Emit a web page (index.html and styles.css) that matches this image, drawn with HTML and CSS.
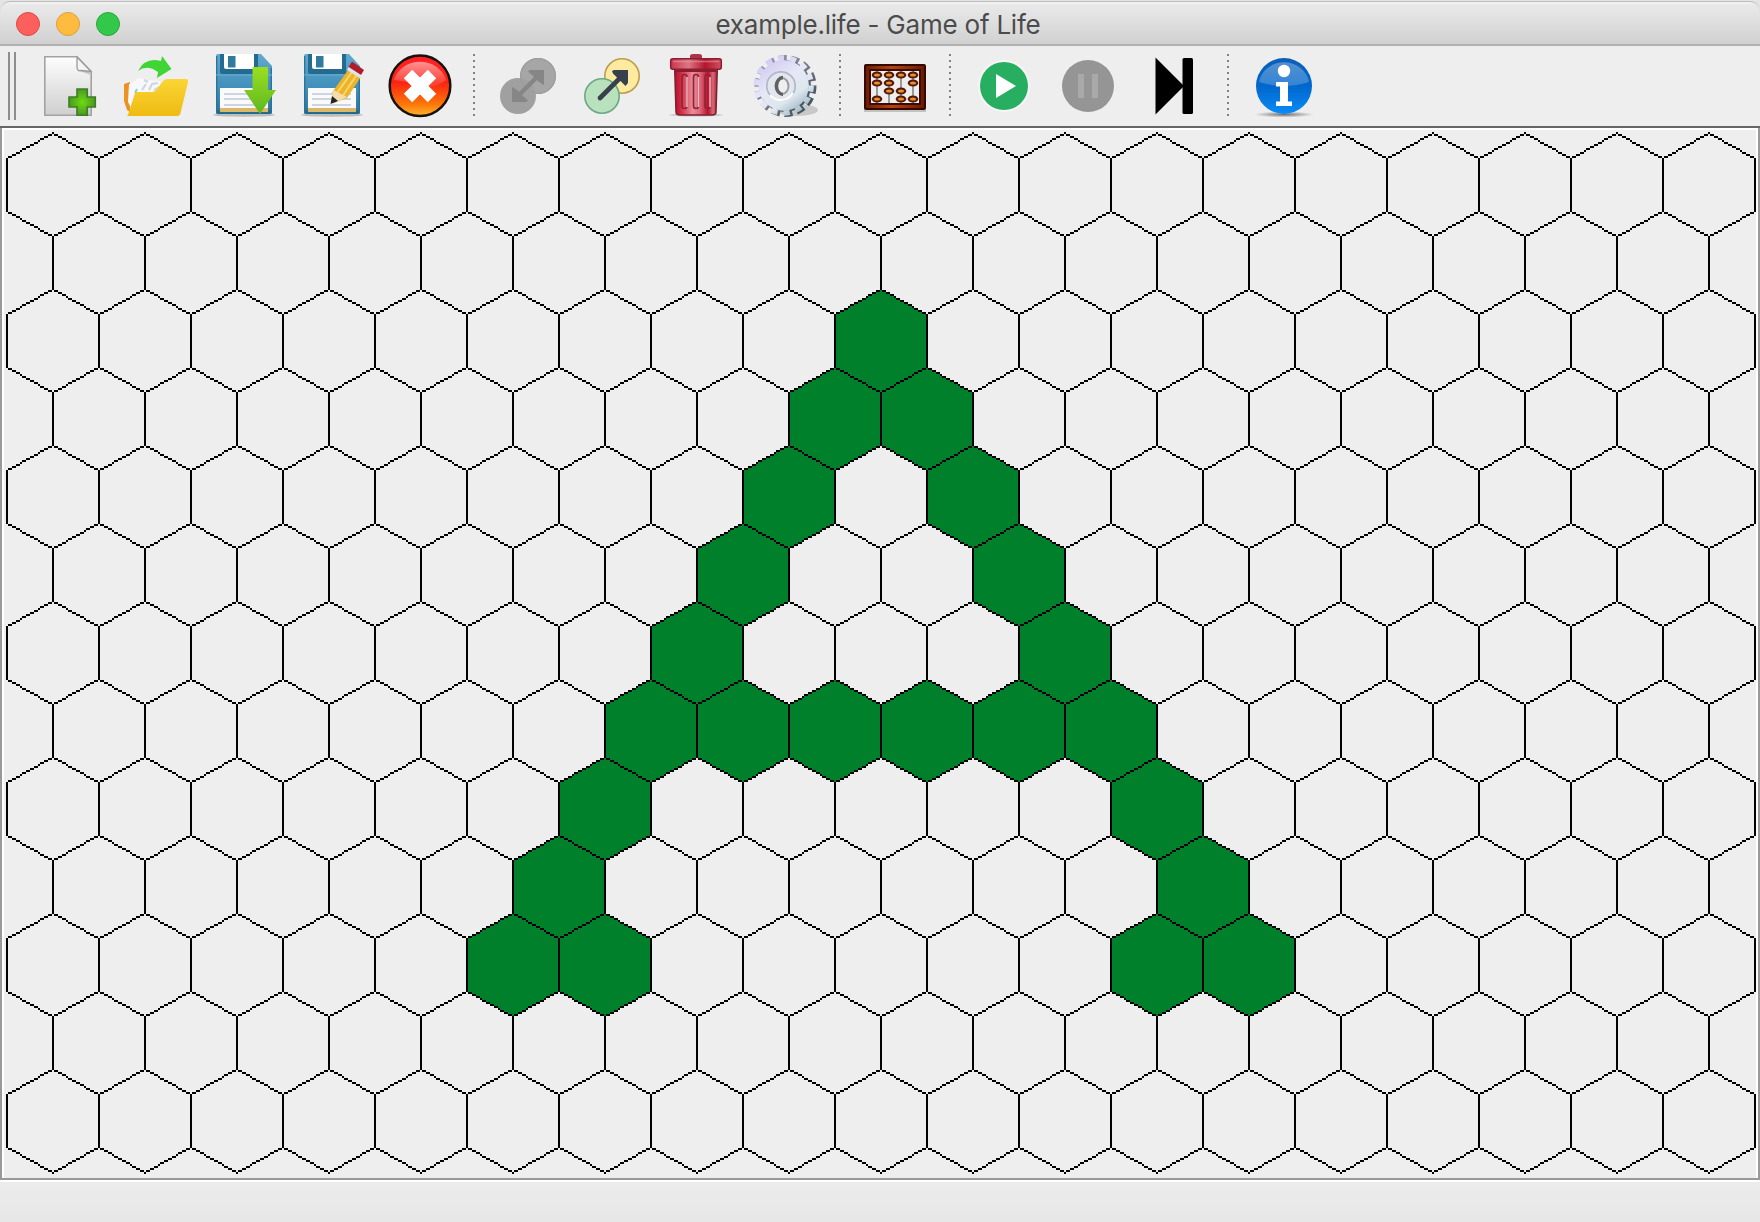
FILE: index.html
```html
<!DOCTYPE html>
<html lang="en">
<head>
<meta charset="utf-8">
<title>example.life - Game of Life</title>
<link rel="stylesheet" href="styles.css">
</head>
<body>
<div class="window">
  <header class="titlebar">
    <div class="lights">
      <span class="light light-close"></span>
      <span class="light light-min"></span>
      <span class="light light-max"></span>
    </div>
    <h1 class="title">example.life - Game of Life</h1>
  </header>

  <nav class="toolbar">
    <span class="grip"></span>

    <svg class="tool" width="88" height="80" viewBox="26 46 88 80" role="img" aria-label="New">
      <defs>
        <linearGradient id="paper" x1="0" y1="0" x2="0" y2="1"><stop offset="0" stop-color="#fdfdfd"/><stop offset="1" stop-color="#cfcfcf"/></linearGradient>
        <radialGradient id="plus"><stop offset="0" stop-color="#6ddb10"/><stop offset="1" stop-color="#489a22"/></radialGradient>
      </defs>
      <path d="M44.8 56.8H77L91.200 71.500V115.200H44.800Z" fill="url(#paper)" stroke="#a2a2a2" stroke-width="1.600"/>
      <path d="M77 57V69Q77 72 81 71.500L91 75V71Z" fill="#c2c2c2"/>
      <path d="M77 57V67Q77 71 81 70.500L91 71.500Z" fill="#f4f4f4" stroke="#999" stroke-width="1.300"/>
      <path d="M77 89H87.300V97H95.300V107H87.300V115.300H77V107H69V97H77Z" fill="url(#plus)" stroke="#3f7c25" stroke-width="1.600"/>
    </svg>

    <svg class="tool" width="87" height="80" viewBox="114 46 87 80" role="img" aria-label="Open">
      <defs><linearGradient id="folder" x1="0" y1="0" x2="0" y2="1"><stop offset="0" stop-color="#fad534"/><stop offset="1" stop-color="#efbb12"/></linearGradient></defs>
      <path d="M124 84L130 82V112L127 110L124 101Z" fill="#ec9224"/>
      <path d="M129 84L135 81L138 78L148 80L160 81L162 93L131 108L128 102Z" fill="#f8f8fa"/>
      <path d="M142 90L146 84M148 82L144 80M149 90L152 84L158 83M154 90L160 87" fill="none" stroke="#cdd6e2" stroke-width="2.200"/>
      <path d="M135 93L137 89" stroke="#7fd0e2" stroke-width="2"/>
      <path d="M128 115L135 93Q135.500 92 137 92H152Q155 92 157 89L163 81Q165 79 167 79H186Q188.500 79 188 82L180.500 113Q180 116 177 116H128Q126 116 128 115Z" fill="url(#folder)"/>
      <path d="M138 71Q145 57 161 61L162 56L171.500 69L157 78L158 72Q147 64 138 71Z" fill="#40d534"/>
    </svg>

    <svg class="tool" width="88" height="80" viewBox="201 46 88 80" role="img" aria-label="Save">
      <defs>
        <linearGradient id="disk" x1="0" y1="0" x2="0" y2="1"><stop offset="0" stop-color="#62a9d0"/><stop offset=".6" stop-color="#3e8eb8"/><stop offset="1" stop-color="#2d7598"/></linearGradient>
        <linearGradient id="down" x1="0" y1="0" x2="0" y2="1"><stop offset="0" stop-color="#9adf20"/><stop offset="1" stop-color="#5fb621"/></linearGradient>
        <g id="floppy">
          <ellipse cx="244" cy="115" rx="31" ry="1.700" fill="#bcbcbc"/>
          <path d="M218 54H261L272 66V112Q272 114 270 114H218Q216 114 216 112V56Q216 54 218 54Z" fill="url(#disk)"/>
          <path d="M216 110H272V112Q272 114 270 114H218Q216 114 216 112Z" fill="#236b91"/>
          <path d="M216.700 56V112M271.300 68V112" stroke="#2c7199" stroke-width="1.300"/>
          <path d="M220 54H258V74H222Q220 74 220 72Z" fill="#236b91"/>
          <path d="M224 54H254V69H226Q224 69 224 67Z" fill="#fff"/>
          <rect x="228" y="56" width="7.500" height="11.500" fill="#32799e"/>
          <path d="M216 75H272" stroke="#70acd0" stroke-width="1"/>
          <path d="M220 88H268V111H220Z" fill="#fafafa"/>
          <path d="M224 94H263M224 99H263M224 105H263" stroke="#bcc7d8" stroke-width="1.700"/>
          <rect x="220" y="108" width="48" height="4" fill="#dcb768"/>
        </g>
      </defs>
      <use href="#floppy"/>
      <path d="M252.500 67H268V90H276L260 114L244 90H252.500Z" fill="url(#down)"/>
    </svg>

    <svg class="tool" width="87" height="80" viewBox="289 46 87 80" role="img" aria-label="Save As">
      <use href="#floppy" x="88"/>
      <path d="M348.500 69.500L360.500 77.500L347 98L333 103.500L332 92.500Z" fill="#ecb42b"/>
      <path d="M352 72L337 93M356.500 75L342 97" stroke="#f9d66b" stroke-width="2"/>
      <path d="M333 90L347 97L337 102L331 103Z" fill="#f3deb0"/>
      <path d="M332 96L338 101L330.500 104Z" fill="#222"/>
      <path d="M352 61.500L364 70L361 75L348.500 67Z" fill="#b11c29"/>
      <path d="M348.500 67L361 75L359.500 78L347 70Z" fill="#e5e2e5"/>
    </svg>

    <svg class="tool" width="88" height="80" viewBox="376 46 88 80" role="img" aria-label="Close">
      <defs><linearGradient id="red" x1="0" y1="0" x2="0" y2="1"><stop offset="0" stop-color="#ff2028"/><stop offset=".45" stop-color="#fb2412"/><stop offset=".8" stop-color="#fb7608"/><stop offset="1" stop-color="#ffb52b"/></linearGradient>
      <linearGradient id="shine" x1="0" y1="0" x2="0" y2="1"><stop offset="0" stop-color="#fff" stop-opacity=".5"/><stop offset="1" stop-color="#fff" stop-opacity=".08"/></linearGradient></defs>
      <circle cx="420" cy="85.700" r="30.300" fill="url(#red)" stroke="#17100c" stroke-width="2.500"/>
      <path d="M394 80A27 25 0 0 1 446 80Q433 90 420 85Q405 81 394 80Z" fill="url(#shine)"/>
      <path d="M408 74L432 98M432 74L408 98" stroke="#fff" stroke-width="12"/>
    </svg>

    <span class="separator"></span>

    <svg class="tool" width="88" height="80" viewBox="484 46 88 80" role="img" aria-label="Replace">
      <circle cx="538" cy="76" r="18" fill="#a6a6a6"/>
      <circle cx="518" cy="96" r="18" fill="#a0a0a0"/>
      <circle cx="538" cy="76" r="17.300" fill="none" stroke="#9d9d9d" stroke-width="1.300"/>
      <path d="M518 96L538 76" stroke="#868686" stroke-width="4.500"/>
      <path d="M544 70V85L539 82L532 75L528 71.500L530 70ZM512 102V87L517 90L524 97L528 100.500L526 102Z" fill="#868686"/>
    </svg>

    <svg class="tool" width="82" height="80" viewBox="572 46 82 80" role="img" aria-label="XOR">
      <circle cx="622" cy="76" r="17.200" fill="#ffeba0" stroke="#bd9d4b" stroke-width="1.600"/>
      <circle cx="602" cy="96" r="17.200" fill="#b9e1bd" stroke="#6aaa82" stroke-width="1.600"/>
      <path d="M600 98L622 76" stroke="#37404c" stroke-width="4.600" stroke-linecap="round"/>
      <path d="M628 70V83L625.500 86L613 73.500L612 71L614 70Z" fill="#37404c"/>
    </svg>

    <svg class="tool" width="86" height="80" viewBox="654 46 86 80" role="img" aria-label="Clear">
      <defs>
        <linearGradient id="bin"><stop offset="0" stop-color="#a9152b"/><stop offset=".12" stop-color="#cf233d"/><stop offset=".42" stop-color="#ea8b98"/><stop offset=".6" stop-color="#df6578"/><stop offset=".78" stop-color="#b90f2c"/><stop offset=".9" stop-color="#d86a77"/><stop offset="1" stop-color="#9e1f31"/></linearGradient>
        <linearGradient id="lid"><stop offset="0" stop-color="#c9354b"/><stop offset=".35" stop-color="#dc7785"/><stop offset=".68" stop-color="#b3162c"/><stop offset="1" stop-color="#cd5264"/></linearGradient>
      </defs>
      <ellipse cx="696" cy="115" rx="27" ry="1.500" fill="#c6c6c6"/>
      <path d="M674.700 69H717.300L716 112Q716 115 712 115H680Q676 115 676 112Z" fill="url(#bin)" stroke="#7b2230" stroke-width="1.500"/>
      <path d="M676 71H716" stroke="#8b1d2e" stroke-width="2"/>
      <g fill="none" stroke="#8b2536" stroke-width="1.600"><rect x="682" y="74.500" width="5" height="34" rx="2.500"/><rect x="693.500" y="74.500" width="5" height="34" rx="2.500"/><rect x="705" y="74.500" width="5" height="34" rx="2.500"/></g>
      <path d="M687 77V107M698.500 77V107M710 77V107" stroke="#f0bcc3" stroke-width="1.500"/>
      <path d="M690 59V56Q690 54 693 54H699Q702 54 702 56V59Z" fill="#a93546"/>
      <rect x="670.700" y="58.700" width="50.600" height="10.600" rx="2" fill="url(#lid)" stroke="#8b1e30" stroke-width="1.500"/>
      <path d="M673 61.500H719" stroke="#e596a1" stroke-width="1.500" opacity=".6"/>
    </svg>

    <svg class="tool" width="90" height="80" viewBox="740 46 90 80" role="img" aria-label="Settings">
      <defs>
        <linearGradient id="gear" x1=".1" y1="0" x2=".8" y2="1"><stop offset="0" stop-color="#cfc8f2"/><stop offset=".45" stop-color="#e6e8f6"/><stop offset=".75" stop-color="#dde7ee"/><stop offset="1" stop-color="#a3b7c4"/></linearGradient>
        <linearGradient id="rim" x1="0" y1="0" x2="1" y2="1"><stop offset="0" stop-color="#a29cc4"/><stop offset=".5" stop-color="#777987"/><stop offset="1" stop-color="#2f4858"/></linearGradient>
      </defs>
      <ellipse cx="797" cy="110" rx="21" ry="6" fill="#c8c8c8"/>
      <circle cx="785.500" cy="86" r="27.500" fill="none" stroke="url(#rim)" stroke-width="7" stroke-dasharray="8 4.342" stroke-dashoffset=".8"/>
      <circle cx="785" cy="86" r="26" fill="url(#rim)"/>
      <circle cx="783.700" cy="85.500" r="27.500" fill="none" stroke="url(#gear)" stroke-width="5.400" stroke-dasharray="6.200 6.142"/>
      <circle cx="783.700" cy="85.500" r="25.200" fill="url(#gear)"/>
      <circle cx="781" cy="86" r="14.200" fill="#e2e6ef" stroke="#b3b7c8" stroke-width="1.700"/>
      <path d="M770 95A14 14 0 0 0 793 93" fill="none" stroke="#fff" stroke-width="2"/>
      <ellipse cx="782" cy="86" rx="6.500" ry="8" fill="#eee" stroke="#9c9c9c" stroke-width="2"/>
      <path d="M783 77.500A6.500 8.500 0 0 0 783 94.500" fill="none" stroke="#606060" stroke-width="3.400"/>
    </svg>

    <span class="separator"></span>

    <svg class="tool" width="90" height="80" viewBox="850 46 90 80" role="img" aria-label="Attributes">
      <defs>
        <linearGradient id="wood"><stop offset="0" stop-color="#6c1b05"/><stop offset=".45" stop-color="#b5460f"/><stop offset="1" stop-color="#681903"/></linearGradient>
        <g id="bead"><ellipse rx="5.300" ry="3.500" fill="#54190a"/><ellipse rx="3" ry="1.600" fill="#e6922d"/></g>
      </defs>
      <rect x="864" y="109" width="62" height="3" fill="#c2c2c2"/>
      <rect x="865" y="65" width="60" height="44" rx="1" fill="url(#wood)" stroke="#350800" stroke-width="2"/>
      <rect x="870" y="70" width="50" height="34" fill="#eee" stroke="#3c0c02" stroke-width="2"/>
      <path d="M877 71V103M889 71V103M901 71V103M913 71V103" stroke="#777" stroke-width="1.400"/>
      <use href="#bead" x="877" y="75"/><use href="#bead" x="877" y="83"/><use href="#bead" x="877" y="99"/>
      <use href="#bead" x="889" y="75"/><use href="#bead" x="889" y="83"/><use href="#bead" x="889" y="91"/>
      <use href="#bead" x="901" y="75"/><use href="#bead" x="901" y="91"/><use href="#bead" x="901" y="99"/>
      <use href="#bead" x="913" y="75"/><use href="#bead" x="913" y="83"/><use href="#bead" x="913" y="99"/>
    </svg>

    <span class="separator"></span>

    <svg class="tool" width="86" height="80" viewBox="960 46 86 80" role="img" aria-label="Run">
      <circle cx="1004" cy="86" r="26" fill="#f6f6f6"/>
      <circle cx="1004" cy="86" r="24" fill="#27ae60"/>
      <path d="M996 74L1016 86L996 98Z" fill="#fff"/>
    </svg>

    <svg class="tool" width="86" height="80" viewBox="1046 46 86 80" role="img" aria-label="Pause">
      <circle cx="1088" cy="86" r="26" fill="#959595"/>
      <path d="M1078 74H1084V98H1078ZM1092 74H1098V98H1092Z" fill="#a9a9a9"/>
    </svg>

    <svg class="tool" width="86" height="80" viewBox="1132 46 86 80" role="img" aria-label="Step">
      <path d="M1155.500 57.500L1184 86L1155.500 114.500Z" fill="#000"/>
      <rect x="1182.500" y="58" width="10.500" height="56" rx="1.500" fill="#000"/>
    </svg>

    <span class="separator"></span>

    <svg class="tool" width="92" height="80" viewBox="1238 46 92 80" role="img" aria-label="About">
      <defs>
        <linearGradient id="blue" x1="0" y1="0" x2="0" y2="1"><stop offset="0" stop-color="#0b5fb8"/><stop offset=".5" stop-color="#0067cd"/><stop offset="1" stop-color="#0a8cf6"/></linearGradient>
        <linearGradient id="gloss" x1="0" y1="0" x2="0" y2="1"><stop offset="0" stop-color="#fff" stop-opacity=".3"/><stop offset="1" stop-color="#fff" stop-opacity=".2"/></linearGradient>
        <radialGradient id="shade"><stop offset="0" stop-color="#707070"/><stop offset="1" stop-color="#eee"/></radialGradient>
      </defs>
      <ellipse cx="1284" cy="114.500" rx="30" ry="3" fill="url(#shade)"/>
      <circle cx="1284" cy="86" r="28" fill="url(#blue)"/>
      <path d="M1259 82A25.500 24.500 0 0 1 1309 82Q1284 90 1259 82Z" fill="url(#gloss)"/>
      <circle cx="1284" cy="71" r="6.200" fill="#fff"/>
      <rect x="1276" y="82" width="12" height="4.500" fill="#fff"/>
      <rect x="1280" y="82" width="8" height="24" fill="#fff"/>
      <rect x="1276" y="101.500" width="16" height="4.500" fill="#fff"/>
    </svg>
  </nav>

  <main class="field">
    <svg class="grid" id="grid" width="1752" height="1046" viewBox="2 65 876 523" shape-rendering="crispEdges"></svg>
  </main>

  <footer class="statusbar"></footer>
</div>
<script src="grid.js"></script>
</body>
</html>
```

FILE: styles.css
```css
* {
  box-sizing: border-box;
}

body {
  margin: 0;
  background: #e4e4e4;
  font-family: Inter, "Liberation Sans", sans-serif;
  overflow: hidden;
}

.window {
  display: flex;
  flex-direction: column;
  width: 1760px;
  height: 1222px;
}

.titlebar {
  display: grid;
  grid-template-columns: 300px 1fr 304px;
  align-items: center;
  height: 45px;
  margin-top: 1px;
  border-top: 1px solid #bcbcbc;
  border-bottom: 2px solid #b0b0b0;
  border-radius: 10px 10px 0 0;
  background: linear-gradient(#f4f4f4 0, #e9e9e9 3px, #d1d1d1);
}

.lights {
  display: flex;
  gap: 16px;
  padding: 2px 0 0 16px;
}

.light {
  width: 24px;
  height: 24px;
  border-radius: 50%;
  border: 1px solid;
}

.light-close {
  background: #fc605c;
  border-color: #df4846;
}

.light-min {
  background: #fdbc40;
  border-color: #de9f34;
}

.light-max {
  background: #34c84a;
  border-color: #27a935;
}

.title {
  margin: 0;
  padding-top: 4px;
  text-align: center;
  white-space: nowrap;
  font-size: 26px;
  font-weight: 400;
  line-height: 32px;
  letter-spacing: -0.22px;
  color: #4b4b4b;
}

.toolbar {
  display: flex;
  height: 82px;
  border-bottom: 2px solid #666;
  background: #eee;
}

.grip {
  width: 8px;
  height: 68px;
  margin: 6px 10px 0 8px;
  border: solid #8e8e8e;
  border-width: 0 2px;
}

.tool {
  display: block;
  flex: none;
}

.separator {
  width: 2px;
  height: 62px;
  margin: 8px 9px 0;
  background: repeating-linear-gradient(#808080 0 2px, transparent 2px 6px);
}

.field {
  height: 1052px;
  border: solid #999;
  border-width: 0 2px 2px;
  background: #eee;
  padding: 0 2px;
  box-shadow: inset 0 2px #fff, inset 2px 0 #fff, inset -2px 0 #fff;
}

.grid {
  display: block;
  margin-top: 2px;
}

.alive {
  fill: #00802b;
}

.edges {
  fill: #000;
}

.statusbar {
  flex: 1;
  border-top: 2px solid #fff;
  background: linear-gradient(#ececec, #e7e7e7);
}
```

FILE: grid.js
```js
// Hexagonal board, in logical pixels (two device pixels each).
const ROWS = 13;
const COLS = 19;
const HALF = 23;
const SLOPE = 13;
const SIDE = 26;
const ORIGIN = { x: 26, y: 66 };

const ALIVE = {
  2: [9], 3: [8, 9], 4: [8, 10], 5: [7, 10], 6: [7, 11],
  7: [6, 7, 8, 9, 10, 11], 8: [6, 12], 9: [5, 12], 10: [5, 6, 12, 13]
};

const dots = new Set();
const plot = (x, y) => dots.add(x + "," + y);
let fills = "";

for (let r = 0; r < ROWS; r++) {
  const odd = r % 2;
  for (let c = 0; c < COLS - odd; c++) {
    const cx = ORIGIN.x + odd * HALF + c * HALF * 2;
    const top = ORIGIN.y + r * (SLOPE + SIDE);
    const bottom = top + 2 * SLOPE + SIDE;
    const alive = (ALIVE[r] || []).includes(c);
    for (let d = 0; d <= HALF; d++) {
      const rise = Math.round(d * SLOPE / HALF);
      for (const x of [cx - d, cx + d]) {
        plot(x, top + rise);
        plot(x, bottom - rise);
        if (alive) fills += `M${x} ${top + rise}h1V${bottom - rise + 1}h-1z`;
      }
    }
    for (let y = top + SLOPE; y <= bottom - SLOPE; y++) {
      plot(cx - HALF, y);
      plot(cx + HALF, y);
    }
  }
}

let edges = "";
for (const dot of dots) {
  const [x, y] = dot.split(",").map(Number);
  edges += `M${x} ${y}h1v1h-1z`;
}

document.getElementById("grid").innerHTML =
  `<path class="alive" d="${fills}"/><path class="edges" d="${edges}"/>`;
```
